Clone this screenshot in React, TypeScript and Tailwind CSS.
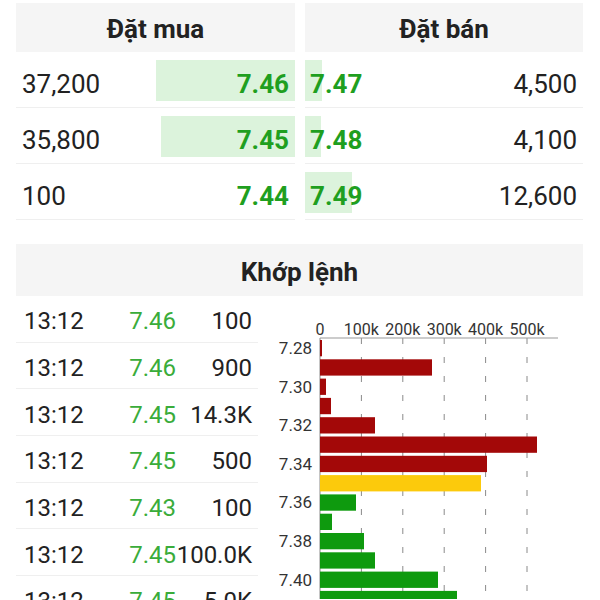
import React from 'react';

const bids = [
  { qty: '37,200', price: '7.46', pct: 50 },
  { qty: '35,800', price: '7.45', pct: 48 },
  { qty: '100', price: '7.44', pct: 0 },
];

const asks = [
  { price: '7.47', qty: '4,500', pct: 6 },
  { price: '7.48', qty: '4,100', pct: 5.6 },
  { price: '7.49', qty: '12,600', pct: 17 },
];

const trades = [
  { time: '13:12', price: '7.46', vol: '100' },
  { time: '13:12', price: '7.46', vol: '900' },
  { time: '13:12', price: '7.45', vol: '14.3K' },
  { time: '13:12', price: '7.45', vol: '500' },
  { time: '13:12', price: '7.43', vol: '100' },
  { time: '13:12', price: '7.45', vol: '100.0K' },
  { time: '13:12', price: '7.45', vol: '5.0K' },
];

// bar length in px from the 0 line, colour by side
const volumes = [
  { label: '7.28', w: 2, c: '#a30808' },
  { label: '7.29', w: 112, c: '#a30808' },
  { label: '7.30', w: 6, c: '#a30808' },
  { label: '7.31', w: 11, c: '#a30808' },
  { label: '7.32', w: 55, c: '#a30808' },
  { label: '7.33', w: 217, c: '#a30808' },
  { label: '7.34', w: 167, c: '#a30808' },
  { label: '7.35', w: 161, c: '#fcca0c' },
  { label: '7.36', w: 36, c: '#0e9a0e' },
  { label: '7.37', w: 12, c: '#0e9a0e' },
  { label: '7.38', w: 44, c: '#0e9a0e' },
  { label: '7.39', w: 55, c: '#0e9a0e' },
  { label: '7.40', w: 118, c: '#0e9a0e' },
  { label: '7.41', w: 137, c: '#0e9a0e' },
];

const ticks = ['0', '100k', '200k', '300k', '400k', '500k'];

const VolumeChart: React.FC = () => {
  const x0 = 62;
  const step = 41.4;
  return (
    <svg width="342" height="303" className="block">
      {ticks.map((t, i) => (
        <g key={t}>
          <line
            x1={x0 + i * step}
            x2={x0 + i * step}
            y1={42}
            y2={303}
            stroke="#8a8a8a"
            strokeWidth="1"
            strokeDasharray={i === 0 ? undefined : '6 13'}
          />
          <text
            x={x0 + i * step}
            y={39}
            textAnchor="middle"
            fontSize="16"
            fill="#333"
            fontFamily="Roboto, sans-serif"
          >
            {t}
          </text>
        </g>
      ))}
      <line x1={x0} x2={300} y1={42} y2={42} stroke="#999" strokeWidth="1" />
      {volumes.map((v, i) => {
        const y = 44 + i * 19.3;
        return (
          <g key={v.label}>
            <rect x={x0} y={y} width={v.w} height={16.3} fill={v.c} />
            {i % 2 === 0 && (
              <text
                x={54}
                y={y + 14}
                textAnchor="end"
                fontSize="17"
                fill="#333"
                fontFamily="Roboto, sans-serif"
              >
                {v.label}
              </text>
            )}
          </g>
        );
      })}
    </svg>
  );
};

export default function App() {
  return (
    <div className="w-[600px] h-[600px] overflow-hidden bg-white text-[#222] font-['Roboto',sans-serif]">
      <div className="grid grid-cols-[279px_278px] gap-[10px] pl-4 pt-[3px]">
        <div>
          <div className="h-[49px] bg-[#f5f5f5] flex items-center justify-center pt-[4px] text-[26px] font-bold">
            Đặt mua
          </div>
          {bids.map((b) => (
            <div key={b.price} className="relative h-[56px] border-b border-[#efefef] flex items-center justify-between text-[26px]">
              <div
                className="absolute right-0 top-[8px] bottom-[6px] bg-[#dcf3dc]"
                style={{ width: `${b.pct}%` }}
              />
              <span className="relative pl-[6px] pt-[10px]">{b.qty}</span>
              <span className="relative pr-[6px] pt-[10px] font-bold text-[#1f9f1f]">{b.price}</span>
            </div>
          ))}
        </div>
        <div>
          <div className="h-[49px] bg-[#f5f5f5] flex items-center justify-center pt-[4px] text-[26px] font-bold">
            Đặt bán
          </div>
          {asks.map((a) => (
            <div key={a.price} className="relative h-[56px] border-b border-[#efefef] flex items-center justify-between text-[26px]">
              <div
                className="absolute left-0 top-[8px] bottom-[6px] bg-[#dcf3dc]"
                style={{ width: `${a.pct}%` }}
              />
              <span className="relative pl-[5px] pt-[10px] font-bold text-[#1f9f1f]">{a.price}</span>
              <span className="relative pr-[6px] pt-[10px]">{a.qty}</span>
            </div>
          ))}
        </div>
      </div>

      <div className="mt-[24px] mx-4 w-[567px] h-[52px] bg-[#f5f5f5] flex items-center justify-center pt-[4px] text-[26px] font-bold">
        Khớp lệnh
      </div>
      <div className="flex">
        <div className="ml-4 w-[242px] shrink-0">
          {trades.map((t, i) => (
            <div key={i} className="h-[46.7px] border-b border-[#efefef] flex items-center pt-[5px] text-[24px]">
              <span className="w-[100px] pl-[8px]">{t.time}</span>
              <span className="w-[60px] text-right text-[#3aac3a]">{t.price}</span>
              <span className="w-[76px] text-right">{t.vol}</span>
            </div>
          ))}
        </div>
        <VolumeChart />
      </div>
    </div>
  );
}
